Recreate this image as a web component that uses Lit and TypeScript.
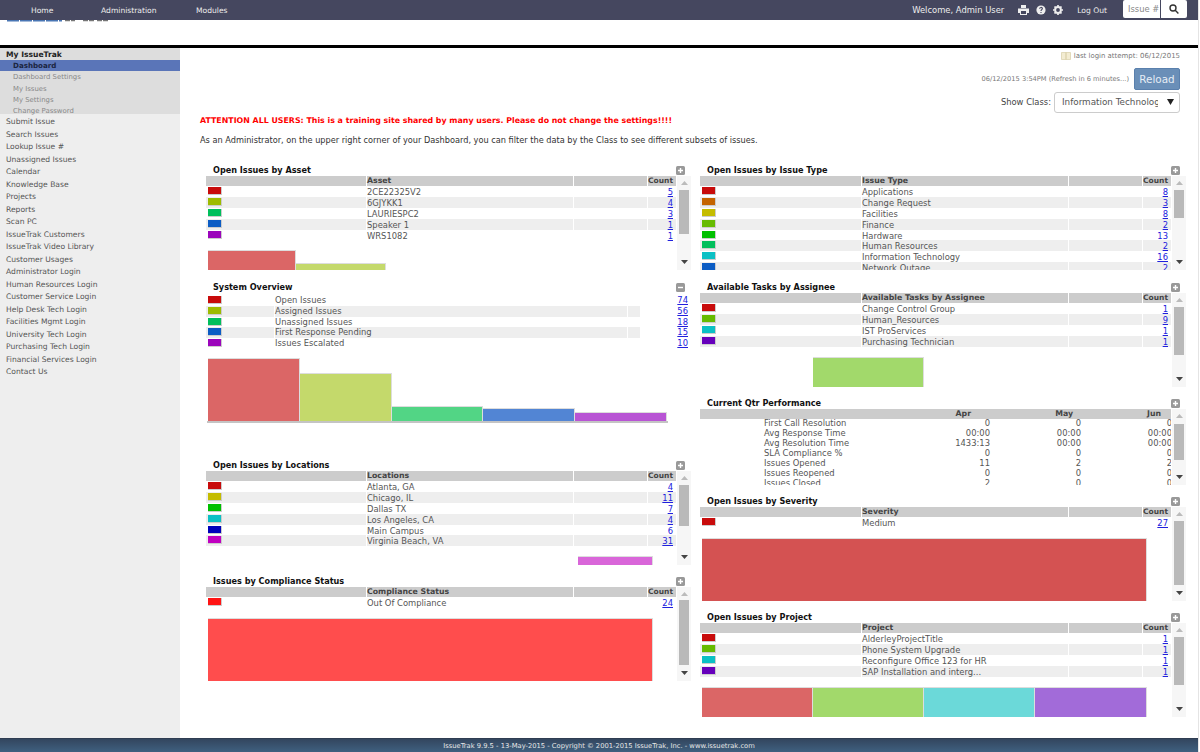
import { LitElement, html, css, svg } from "lit";
import { customElement } from "lit/decorators.js";

const C = { r: "#c80b0b", l: "#9dbb00", g: "#00bf5c", b: "#0b5cc4", p: "#9b05bb", o: "#c46400", y: "#c4bc00", n: "#66bb00", h: "#00c000", t: "#0bc0c4", v: "#6600bb", d: "#0000bb", m: "#c000c0", x: "#ff1414" };
type Row = [string, string, string];
type Bar = { w: number; h: number; c: string };
type P = { title: string; col: string; rows: Row[]; bars?: Bar[]; offset?: number; thumbTop: number; thumbH: number };

const asset: P = { title: "Open Issues by Asset", col: "Asset", rows: [[C.r, "2CE22325V2", "5"], [C.l, "6GJYKK1", "4"], [C.g, "LAURIESPC2", "3"], [C.b, "Speaker 1", "1"], [C.p, "WRS1082", "1"]], bars: [{ w: 88, h: 20, c: "#db6666" }, { w: 90, h: 7, c: "#c4d96b" }], thumbTop: 14, thumbH: 44 };
const locations: P = { title: "Open Issues by Locations", col: "Locations", rows: [[C.r, "Atlanta, GA", "4"], [C.y, "Chicago, IL", "11"], [C.h, "Dallas TX", "7"], [C.t, "Los Angeles, CA", "4"], [C.d, "Main Campus", "6"], [C.m, "Virginia Beach, VA", "31"]], offset: 370, bars: [{ w: 75, h: 9, c: "#d966d9" }], thumbTop: 14, thumbH: 41 };
const compliance: P = { title: "Issues by Compliance Status", col: "Compliance Status", rows: [[C.x, "Out Of Compliance", "24"]], bars: [{ w: 445, h: 63, c: "#ff4d4d" }], thumbTop: 13, thumbH: 65 };
const issueType: P = { title: "Open Issues by Issue Type", col: "Issue Type", rows: [[C.r, "Applications", "8"], [C.o, "Change Request", "3"], [C.y, "Facilities", "8"], [C.n, "Finance", "2"], [C.h, "Hardware", "13"], [C.g, "Human Resources", "2"], [C.t, "Information Technology", "16"], [C.b, "Network Outage", "2"]], thumbTop: 14, thumbH: 28 };
const tasks: P = { title: "Available Tasks by Assignee", col: "Available Tasks by Assignee", rows: [[C.r, "Change Control Group", "1"], [C.n, "Human_Resources", "9"], [C.t, "IST ProServices", "1"], [C.v, "Purchasing Technician", "1"]], offset: 111, bars: [{ w: 111, h: 30, c: "#a2d96b" }], thumbTop: 14, thumbH: 48 };
const severity: P = { title: "Open Issues by Severity", col: "Severity", rows: [[C.r, "Medium", "27"]], bars: [{ w: 445, h: 63, c: "#d45252" }], thumbTop: 14, thumbH: 64 };
const project: P = { title: "Open Issues by Project", col: "Project", rows: [[C.r, "AlderleyProjectTitle", "1"], [C.n, "Phone System Upgrade", "1"], [C.t, "Reconfigure Office 123 for HR", "1"], [C.v, "SAP Installation and interg...", "1"]], bars: [{ w: 111, h: 30, c: "#db6666" }, { w: 111, h: 30, c: "#a2d96b" }, { w: 111, h: 30, c: "#6bd9d9" }, { w: 112, h: 30, c: "#a26bd9" }], thumbTop: 14, thumbH: 48 };

const overview: Row[] = [[C.r, "Open Issues", "74"], [C.l, "Assigned Issues", "56"], [C.g, "Unassigned Issues", "18"], [C.b, "First Response Pending", "15"], [C.p, "Issues Escalated", "10"]];
const overviewBars: Bar[] = [{ w: 91.8, h: 63, c: "#db6666" }, { w: 91.8, h: 48, c: "#c4d96b" }, { w: 91.8, h: 15, c: "#52d585" }, { w: 91.8, h: 13, c: "#5285d4" }, { w: 91.8, h: 9, c: "#b854d4" }];
const qtr: [string, string, string, string][] = [["First Call Resolution", "0", "0", "0"], ["Avg Response Time", "00:00", "00:00", "00:00"], ["Avg Resolution Time", "1433:13", "00:00", "00:00"], ["SLA Compliance %", "0", "0", "0"], ["Issues Opened", "11", "2", "2"], ["Issues Reopened", "0", "0", "0"], ["Issues Closed", "2", "0", "0"]];
const sideLinks = ["Submit Issue", "Search Issues", "Lookup Issue #", "Unassigned Issues", "Calendar", "Knowledge Base", "Projects", "Reports", "Scan PC", "IssueTrak Customers", "IssueTrak Video Library", "Customer Usages", "Administrator Login", "Human Resources Login", "Customer Service Login", "Help Desk Tech Login", "Facilities Mgmt Login", "University Tech Login", "Purchasing Tech Login", "Financial Services Login", "Contact Us"];

const toggle = (minus = false) => html`<svg class="toggle" viewBox="0 0 9 9" width="9" height="9"><rect width="9" height="9" rx="1.5" fill="#999"/><path d="${minus ? "M2 4.5h5" : "M2 4.5h5M4.5 2v5"}" stroke="#fff" stroke-width="1.4"/></svg>`;
const arrowUp = svg`<path d="M0 4 3.5 0 7 4z"/>`;
const arrowDown = svg`<path d="M0 0 3.5 4 7 0z"/>`;

@customElement("app-root")
export class AppRoot extends LitElement {
  static styles = css`
    :host { display: block; width: 1200px; height: 752px; overflow: hidden; background: #fff; font-family: "DejaVu Sans", Verdana, sans-serif; font-size: 8.4px; color: #555; }
    .page { display: flex; flex-direction: column; width: 1199px; height: 752px; border-right: 1px solid #e4e4e4; box-sizing: border-box; }
    .top { height: 20px; background: #45475f; color: #eee; display: flex; align-items: center; flex: none; }
    .nav { display: flex; padding-left: 31px; font-size: 7.6px; }
    .nav span:nth-child(1) { width: 70px; }
    .nav span:nth-child(2) { width: 95px; }
    .right { margin-left: auto; display: flex; align-items: center; height: 20px; }
    .welcome { margin-right: 14px; }
    .ico { margin-right: 7px; display: block; }
    .logout { margin: 0 16px 0 7px; font-size: 7.6px; }
    .search { display: flex; height: 18px; width: 64px; margin-right: 11px; margin-top: -2px; }
    .search .inp { width: 37px; background: #fff; color: #888; padding: 0 0 0 5px; box-sizing: border-box; line-height: 18px; border-radius: 2px 0 0 2px; white-space: nowrap; overflow: hidden; }
    .search .btn { flex: 1; margin-left: 1px; background: #fff; display: flex; align-items: center; justify-content: center; border-radius: 0 2px 2px 0; }
    .logo { height: 25px; flex: none; overflow: hidden; }
    .logo svg { display: block; }
    .rule { height: 2.5px; background: #000; flex: none; }
    .shell { flex: 1; display: flex; min-height: 0; }
    .side { width: 180px; background: #eee; flex: none; }
    .group { background: #ddd; height: 66.5px; padding-top: 1.5px; box-sizing: border-box; }
    .group .hd { color: #222; font-weight: 700; padding-left: 6px; height: 11px; line-height: 11px; font-size: 7.6px; }
    .group .act { background: #5a75b8; color: #1b2440; font-weight: 700; height: 11px; line-height: 11px; padding-left: 13px; font-size: 7.1px; }
    .group .sub { height: 11px; line-height: 11px; padding-left: 13px; color: #888; font-size: 6.9px; }
    .group .act + .sub { height: 13px; line-height: 13px; }
    .links { padding-top: 2px; }
    .links div { height: 12.5px; line-height: 12.5px; padding-left: 6px; color: #555; font-size: 7.6px; }
    .main { flex: 1; position: relative; min-width: 0; }
    .meta { height: 116.5px; box-sizing: border-box; position: relative; }
    .login { display: flex; justify-content: flex-end; align-items: center; gap: 3px; padding: 2px 18px 0 0; height: 12px; color: #777; font-size: 6.95px; }
    .reload-row { display: flex; justify-content: flex-end; align-items: center; gap: 5px; padding: 6px 18px 0 0; color: #777; font-size: 6.67px; }
    .reload { width: 46px; height: 22px; background: #6a8fb8; color: #e6edf5; border-radius: 2px; border: 1px solid #5a80ad; box-sizing: border-box; font-size: 10.4px; display: flex; align-items: center; justify-content: center; }
    .class-row { display: flex; justify-content: flex-end; align-items: center; gap: 3px; padding: 2px 18px 0 0; color: #444; }
    .select { width: 126px; height: 21px; box-sizing: border-box; border: 1px solid #ccc; border-radius: 3px; padding-left: 7px; font-size: 8.8px; line-height: 19px; color: #555; position: relative; white-space: nowrap; overflow: hidden; background: #fff; }
    .select .clip { display: block; width: 96px; overflow: hidden; }
    .select svg { position: absolute; right: 5px; top: 6px; }
    .attn { position: absolute; left: 20px; top: 68px; color: #f00; font-weight: 700; font-size: 7.87px; white-space: nowrap; }
    .note { position: absolute; left: 20px; top: 87.5px; color: #333; font-size: 8.2px; white-space: nowrap; }
    .cols { display: grid; grid-template-columns: 485px 486px; column-gap: 9px; padding-left: 26px; }
    .col { display: flex; flex-direction: column; }
    .panel { flex: none; }
    .ph { height: 12px; display: flex; justify-content: space-between; align-items: center; padding-left: 7px; padding-right: 6px; color: #111; font-weight: 700; font-size: 8.15px; box-sizing: border-box; }
    .toggle { display: block; }
    .pb { height: 94px; display: flex; overflow: hidden; }
    .pc { flex: 1; min-width: 0; overflow: hidden; display: flex; flex-direction: column; }
    .rowg { display: grid; grid-template-columns: 160px 206px 73px 1fr; column-gap: 1px; height: 10.83px; line-height: 12px; flex: none; }
    .r2 .rowg { grid-template-columns: 161px 206px 73px 1fr; }
    .rowg > div { white-space: nowrap; position: relative; min-width: 0; height: 10.83px; }
    .rowg.head { height: 10px; line-height: 10px; margin-bottom: .3px; font-weight: 700; color: #444; font-size: 7.8px; }
    .rowg.head > div { background: #ccc; height: 10px; }
    .rowg.head .num { font-size: 7.5px; }
    .rowg.alt > div { background: #eee; }
    .num { text-align: right; padding-right: 3px; }
    .num a, .ovnum a { color: #2020dd; text-decoration: underline; }
    .swatch { display: block; position: absolute; left: 2px; top: 1px; width: 13px; height: 7px; box-sizing: content-box; border-right: 1px solid #ccc; border-bottom: 1px solid #ccc; }
    .chart { margin-top: auto; display: flex; align-items: flex-end; padding-left: 2px; flex: none; }
    .bar { flex: none; box-sizing: border-box; border-top: 1px solid #ddd; border-right: 1px solid #ddd; }
    .sb { width: 14px; margin-left: 1px; flex: none; background: #f6f6f6; position: relative; }
    .sb svg { position: absolute; left: 3.5px; display: block; }
    .sb .up { top: 5px; fill: #bbb; }
    .sb .down { bottom: 6px; fill: #444; }
    .sb .thumb { position: absolute; left: 2px; width: 10px; background: #b9b9b9; }
    .ov { height: 166px; padding-top: 2px; box-sizing: border-box; }
    .ovr { display: grid; grid-template-columns: 68px 352px 12px 1fr; column-gap: 1px; height: 10.83px; line-height: 10.8px; }
    .ovr > div { position: relative; white-space: nowrap; }
    .ovr.alt > div { background: #eee; }
    .ovr.alt > div:last-child { background: #fff; }
    .ovnum { text-align: right; padding-right: 3px; }
    .ovchart { display: flex; align-items: flex-end; margin: 9px 0 0 1px; width: 461px; border-bottom: 2px solid #c4c4c4; padding-left: 1px; box-sizing: border-box; }
    .m10 { margin-top: 10px; }
    .mt { margin-top: 11px; }
    .qb { height: 76px; }
    .qr { display: grid; grid-template-columns: 64px 135px 91px 91px 1fr; height: 10px; line-height: 10px; flex: none; white-space: nowrap; }
    .qr > div:nth-child(n+3) { text-align: right; }
    .qh { background: #ccc; font-weight: 700; color: #444; font-size: 7.8px; height: 9.5px; line-height: 9.5px; margin-bottom: -.5px; }
    .qh .a { padding-right: 19px; }
    .qh .m { padding-right: 8px; }
    .qh .j { padding-right: 10px; }
    .qr.d { margin-right: -1px; }
    .foot { height: 14px; flex: none; background: linear-gradient(#33465f, #3f607f); color: #e6e6e6; text-align: center; font-size: 6.75px; line-height: 14px; border-top: 1px solid #2f3d52; box-sizing: border-box; }
  `;

  private panel(p: P, cls = "") {
    return html`<div class="panel ${cls}">
      <div class="ph"><span>${p.title}</span>${toggle()}</div>
      <div class="pb">
        <div class="pc">
          <div class="rowg head"><div></div><div>${p.col}</div><div></div><div class="num">Count</div></div>
          ${p.rows.map((r, i) => html`<div class="rowg ${i % 2 ? "alt" : ""}"><div><i class="swatch" style="background:${r[0]}"></i></div><div>${r[1]}</div><div></div><div class="num"><a>${r[2]}</a></div></div>`)}
          ${p.bars ? html`<div class="chart" style="padding-left:${2 + (p.offset ?? 0)}px">${p.bars.map((b) => html`<div class="bar" style="width:${b.w}px;height:${b.h}px;background:${b.c}"></div>`)}</div>` : ""}
        </div>
        ${this.scroll(p.thumbTop, p.thumbH)}
      </div>
    </div>`;
  }
  private scroll(top: number, h: number) {
    return html`<div class="sb"><svg class="up" width="7" height="4" viewBox="0 0 7 4">${arrowUp}</svg><div class="thumb" style="top:${top}px;height:${h}px"></div><svg class="down" width="7" height="4" viewBox="0 0 7 4">${arrowDown}</svg></div>`;
  }

  render() {
    return html`<div class="page">
      <div class="top">
        <div class="nav"><span>Home</span><span>Administration</span><span>Modules</span></div>
        <div class="right">
          <span class="welcome">Welcome, Admin User</span>
          <svg class="ico" width="11" height="10" viewBox="0 0 11 10" fill="#eee"><path d="M3 0h5v3H3zM0 3.5h11V8H9v2H2V8H0z"/><rect x="3" y="6" width="5" height="3" fill="#45475f"/></svg>
          <svg class="ico" width="10" height="10" viewBox="0 0 10 10"><circle cx="5" cy="5" r="4.6" fill="#eee"/><path d="M3.6 3.8C3.7 2 6.4 2 6.4 3.6 6.4 4.7 5 4.7 5 6M5 6.9v1" stroke="#45475f" stroke-width="1.1" fill="none"/></svg>
          <svg class="ico" width="10" height="10" viewBox="0 0 10 10"><circle cx="5" cy="5" r="2.9" fill="none" stroke="#eee" stroke-width="2"/><path d="M5 0v10M0 5h10M1.5 1.5l7 7M8.5 1.5l-7 7" stroke="#eee" stroke-width="1.7" stroke-dasharray="1.6 6.8"/></svg>
          <span class="logout">Log Out</span>
          <div class="search"><div class="inp">Issue #</div><div class="btn"><svg width="10" height="10" viewBox="0 0 10 10" fill="none" stroke="#333" stroke-width="1.4"><circle cx="4" cy="4" r="3"/><path d="M6.2 6.2 9.4 9.4"/></svg></div></div>
        </div>
      </div>
      <div class="logo"><svg width="120" height="2" viewBox="0 0 120 2"><path d="M7 .8h55" stroke="#4a76b4" stroke-width="1.6" stroke-dasharray="12 1"/><path d="M65 .6h10M83 .6h12M97 .6h12" stroke="#777" stroke-width="1.2" stroke-dasharray="5 1"/></svg></div>
      <div class="rule"></div>
      <div class="shell">
        <div class="side">
          <div class="group">
            <div class="hd">My IssueTrak</div>
            <div class="act">Dashboard</div>
            <div class="sub">Dashboard Settings</div>
            <div class="sub">My Issues</div>
            <div class="sub">My Settings</div>
            <div class="sub">Change Password</div>
          </div>
          <div class="links">${sideLinks.map((l) => html`<div>${l}</div>`)}</div>
        </div>
        <div class="main">
          <div class="meta">
            <div class="login"><svg width="10" height="8" viewBox="0 0 10 8" fill="#f3ecd2" stroke="#d8cfa8" stroke-width=".7"><path d="M.5.5h4.5v7H.5zM5 .5h4.5v7H5z"/></svg><span>last login attempt: 06/12/2015</span></div>
            <div class="reload-row"><span>06/12/2015 3:54PM (Refresh in 6 minutes...)</span><div class="reload">Reload</div></div>
            <div class="class-row"><span>Show Class:</span><div class="select"><span class="clip">Information Technology</span><svg width="7" height="6" viewBox="0 0 7 6" fill="#222"><path d="M0 0h7L3.5 6z"/></svg></div></div>
            <div class="attn">ATTENTION ALL USERS: This is a training site shared by many users. Please do not change the settings!!!!</div>
            <div class="note">As an Administrator, on the upper right corner of your Dashboard, you can filter the data by the Class to see different subsets of issues.</div>
          </div>
          <div class="cols">
            <div class="col">
              ${this.panel(asset)}
              <div class="panel mt">
                <div class="ph"><span>System Overview</span>${toggle(true)}</div>
                <div class="ov">
                  ${overview.map((r, i) => html`<div class="ovr ${i % 2 ? "alt" : ""}"><div><i class="swatch" style="background:${r[0]}"></i></div><div>${r[1]}</div><div></div><div class="ovnum"><a>${r[2]}</a></div></div>`)}
                  <div class="ovchart">${overviewBars.map((b) => html`<div class="bar" style="width:${b.w}px;height:${b.h}px;background:${b.c}"></div>`)}</div>
                </div>
              </div>
              ${this.panel(locations)}
              ${this.panel(compliance, "m10")}
            </div>
            <div class="col r2">
              ${this.panel(issueType)}
              ${this.panel(tasks, "mt")}
              <div class="panel m10">
                <div class="ph"><span>Current Qtr Performance</span>${toggle()}</div>
                <div class="pb qb">
                  <div class="pc">
                    <div class="qr qh"><div></div><div></div><div class="a">Apr</div><div class="m">May</div><div class="j">Jun</div></div>
                    ${qtr.map((q) => html`<div class="qr d"><div></div><div>${q[0]}</div><div>${q[1]}</div><div>${q[2]}</div><div>${q[3]}</div></div>`)}
                  </div>
                  ${this.scroll(15, 36)}
                </div>
              </div>
              ${this.panel(severity, "m10")}
              ${this.panel(project, "m10")}
            </div>
          </div>
        </div>
      </div>
      <div class="foot">IssueTrak 9.9.5 - 13-May-2015 - Copyright © 2001-2015 IssueTrak, Inc. - www.issuetrak.com</div>
    </div>`;
  }
}
